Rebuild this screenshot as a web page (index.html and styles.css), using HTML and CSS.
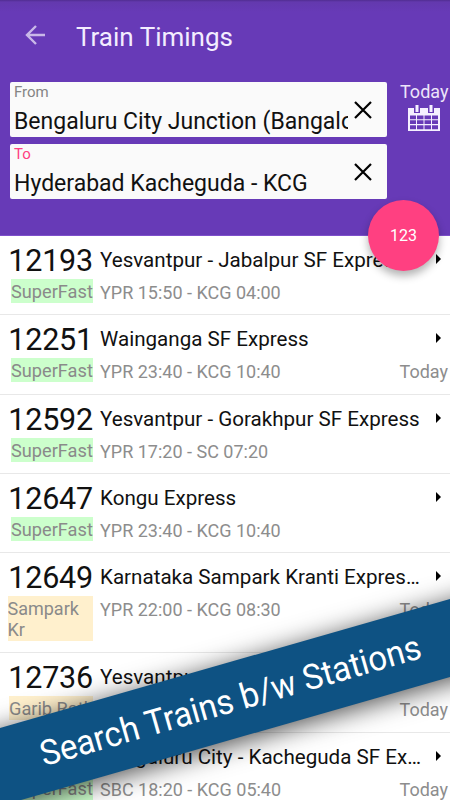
FILE: index.html
```html
<!DOCTYPE html>
<html lang="en">
<head>
<meta charset="utf-8">
<title>Train Timings</title>
<link rel="stylesheet" href="styles.css">
</head>
<body>
<div class="screen">
  <header class="header">
    <div class="toolbar">
      <svg class="back" width="20" height="20" viewBox="0 0 20 20"><path d="M20 10H1.800M11 1L2 10l9 9"/></svg>
      <h1 class="title">Train Timings</h1>
    </div>
    <div class="search">
      <div class="fields">
        <div class="field">
          <div class="label">From</div>
          <div class="value">Bengaluru City Junction (Bangalore)</div>
          <svg class="clear" width="18" height="18" viewBox="0 0 18 18"><path d="M1 1l16 16M17 1L1 17"/></svg>
        </div>
        <div class="field">
          <div class="label active">To</div>
          <div class="value">Hyderabad Kacheguda - KCG</div>
          <svg class="clear" width="18" height="18" viewBox="0 0 18 18"><path d="M1 1l16 16M17 1L1 17"/></svg>
        </div>
      </div>
      <div class="date">
        <div class="date-text">Today</div>
        <svg class="calendar" width="32" height="26" viewBox="0 0 32 26">
          <path class="sheet" d="M0 3h32v23H0z"/>
          <path class="hole" d="M6 0h6v8H6zM20 0h6v8h-6z"/>
          <path class="sheet" d="M7.500 0h3v7h-3zM21.500 0h3v7h-3z"/>
          <path class="hole" d="M2 10.500h6v3.700H2zM9 10.500h6.500v3.700H9zM16.500 10.500H23v3.700h-6.500zM24 10.500h6v3.700h-6zM2 15.300h6v3.800H2zM9 15.300h6.500v3.800H9zM16.500 15.300H23v3.800h-6.500zM24 15.300h6v3.800h-6zM2 20.200h6v4H2zM9 20.200h6.500v4H9zM16.500 20.200H23v4h-6.500zM24 20.200h6v4h-6z"/>
        </svg>
      </div>
    </div>
    <div class="fab">123</div>
  </header>
  <main class="list">
    <div class="row">
      <div class="left"><div class="number">12193</div><div class="chip">SuperFast</div></div>
      <div class="info"><div class="name">Yesvantpur - Jabalpur SF Express</div><div class="times"><span>YPR 15:50 - KCG 04:00</span></div></div>
      <i class="arrow"></i>
    </div>
    <div class="row">
      <div class="left"><div class="number">12251</div><div class="chip">SuperFast</div></div>
      <div class="info"><div class="name">Wainganga SF Express</div><div class="times"><span>YPR 23:40 - KCG 10:40</span><span>Today</span></div></div>
      <i class="arrow"></i>
    </div>
    <div class="row">
      <div class="left"><div class="number">12592</div><div class="chip">SuperFast</div></div>
      <div class="info"><div class="name">Yesvantpur - Gorakhpur SF Express</div><div class="times"><span>YPR 17:20 - SC 07:20</span></div></div>
      <i class="arrow"></i>
    </div>
    <div class="row">
      <div class="left"><div class="number">12647</div><div class="chip">SuperFast</div></div>
      <div class="info"><div class="name">Kongu Express</div><div class="times"><span>YPR 23:40 - KCG 10:40</span></div></div>
      <i class="arrow"></i>
    </div>
    <div class="row tall">
      <div class="left"><div class="number">12649</div><div class="chip sampark">Sampark Kr</div></div>
      <div class="info"><div class="name">Karnataka Sampark Kranti Expres…</div><div class="times"><span>YPR 22:00 - KCG 08:30</span><span>Today</span></div></div>
      <i class="arrow"></i>
    </div>
    <div class="row">
      <div class="left"><div class="number">12736</div><div class="chip garib">Garib Rath</div></div>
      <div class="info"><div class="name">Yesvantpur</div><div class="times"><span></span><span>Today</span></div></div>
    </div>
    <div class="row">
      <div class="left"><div class="number">12785</div><div class="chip">SuperFast</div></div>
      <div class="info"><div class="name">Bengaluru City - Kacheguda SF Ex…</div><div class="times"><span>SBC 18:20 - KCG 05:40</span><span>Today</span></div></div>
      <i class="arrow"></i>
    </div>
  </main>
  <div class="ribbon"><span class="ribbon-text">Search Trains b/w Stations</span></div>
</div>
</body>
</html>
```

FILE: styles.css
```css
* { box-sizing: border-box; }
body { margin: 0; font-family: Roboto, "Liberation Sans", sans-serif; }
.screen { position: relative; width: 450px; height: 800px; overflow: hidden; background: #fff; }

.header {
  position: relative;
  height: 236px;
  background: linear-gradient(#512d91 0, #6339ae 2px, #673ab7 12px);
  border-bottom: 1px solid #7e50cb;
}
.toolbar { display: flex; align-items: center; height: 82px; padding: 0 0 11px 25px; }
.back { margin-top: -1px; fill: none; stroke: #c9b8e8; stroke-width: 2.4; }
.title { margin: 3px 0 0 31px; color: #f3edff; font-size: 26px; line-height: 32px; font-weight: 400; }

.search { display: flex; padding-left: 10px; }
.fields { display: flex; flex-direction: column; gap: 7px; width: 377px; }
.field {
  display: grid;
  grid-template: 21px 34px / 334px 1fr;
  height: 55px;
  padding-left: 4px;
  background: #fafafa;
  border-radius: 2px;
}
.label { color: #858585; font-size: 15px; line-height: 21px; grid-area: 1 / 1; }
.label.active { color: #ff4081; }
.value { grid-area: 2 / 1; color: #111; font-size: 23px; line-height: 38px; white-space: nowrap; overflow: hidden; }
.clear { grid-area: 1 / 2 / 3 / 3; align-self: center; margin-left: 6px; fill: none; stroke: #000; stroke-width: 2.200; }

.date { width: 63px; padding-left: 13px; }
.date-text { color: #ece4fa; font-size: 18px; line-height: 20px; white-space: nowrap; }
.calendar { display: block; margin: 3px 0 0 8px; }
.sheet { fill: #f5f0ff; }
.hole { fill: #673ab7; }

.fab {
  position: absolute; left: 368px; top: 200px; z-index: 2;
  width: 71px; height: 71px; border-radius: 50%;
  background: #ff4081; color: #fff;
  font-size: 16px; line-height: 72px; text-align: center;
  box-shadow: 0 5px 9px rgba(0,0,0,.3);
}

.row { display: flex; height: 79.300px; border-bottom: 1px solid #e8e8e8; }
.row.tall { height: 100.300px; }
.left { display: flex; flex-direction: column; align-items: flex-end; width: 93px; margin-right: 7px; }
.number { color: #111; font-size: 30.500px; letter-spacing: -.2px; line-height: 36px; height: 43px; padding-top: 7px; white-space: nowrap; }
.chip { width: 82px; height: 24px; background: #ccffcc; color: #8a8a8a; font-size: 18.200px; line-height: 26px; white-space: nowrap; overflow: hidden; }
.chip.sampark { width: 85.500px; height: 45px; background: #fff0cd; font-size: 18px; line-height: 21px; padding-top: 2px; white-space: normal; }
.chip.garib { width: 84px; background: #fff0cd; }
.info { flex: none; width: 348px; }
.name { color: #111; font-size: 20.600px; line-height: 26px; margin-top: 11px; width: 324px; white-space: nowrap; overflow: hidden; }
.times { display: flex; justify-content: space-between; color: #8d8d8d; font-size: 18px; line-height: 25px; margin-top: 7px; white-space: nowrap; }
.arrow { flex: none; width: 0; height: 0; margin: 18px 0 0 -12px; border: solid transparent; border-width: 5px 0 5px 5px; border-left-color: #000; }

.ribbon {
  position: absolute; left: -75px; top: 665px; z-index: 3;
  width: 600px; height: 75px;
  transform: rotate(-16deg);
  background: #0e5283; color: #fff;
  font-size: 35px; line-height: 75px; text-align: center; white-space: nowrap;
  box-shadow: 0 4px 26px rgba(0,0,0,.7);
}
.ribbon-text { display: inline-block; margin-left: 12px; transform: scaleX(.945); }
```
